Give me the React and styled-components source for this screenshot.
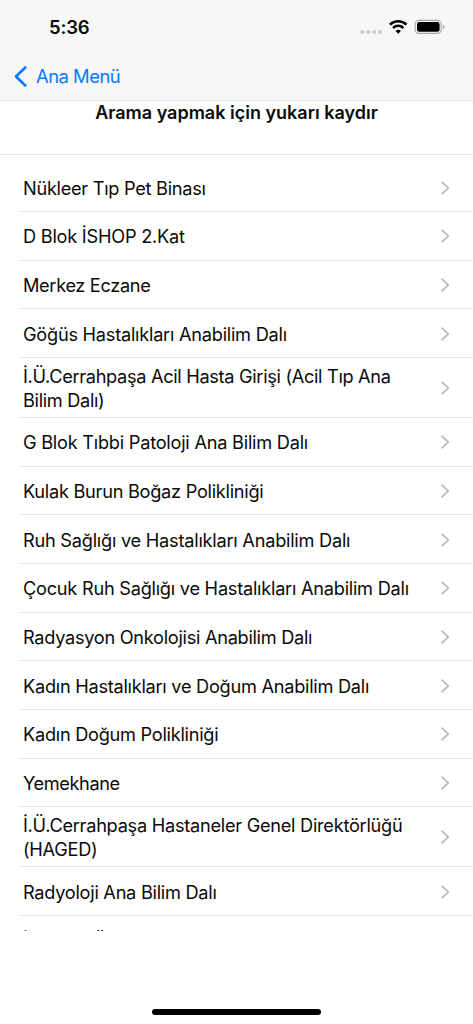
import styled, { createGlobalStyle } from "styled-components";

const GlobalStyle = createGlobalStyle`
  * {
    box-sizing: border-box;
  }
  body {
    margin: 0;
    background-color: #ffffff;
    font-family: Inter, "Liberation Sans", sans-serif;
    color: #0a0a0a;
  }
`;

const Container = styled.div`
  height: 1024px;
  display: flex;
  flex-direction: column;
  overflow: hidden;
`;
const Header = styled.header`
  flex: none;
  height: 101px;
  background-color: #f7f7f7;
  border-bottom: 1px solid #e4e4e4;
`;
const StatusBar = styled.div`
  height: 53px;
  padding: 1px 28px 0 49px;
  display: flex;
  align-items: center;
  justify-content: space-between;
`;
const Time = styled.span`
  font-size: 18.5px;
  font-weight: 600;
  letter-spacing: -0.2px;
`;
const StatusIcons = styled.svg`
  display: block;
`;
const BackButton = styled.button`
  height: 47px;
  padding: 0 0 0 14px;
  display: flex;
  align-items: center;
  gap: 9px;
  border: none;
  background: none;
  color: #087aff;
  font-family: inherit;
  font-size: 18.4px;
  letter-spacing: -0.5px;
`;
const BackLabel = styled.span`
  padding-bottom: 2px;
`;
const Banner = styled.div`
  flex: none;
  height: 54px;
  border-bottom: 1px solid #e6e6e6;
  text-align: center;
`;
const Title = styled.h1`
  margin: 0;
  font-size: 18px;
  font-weight: 600;
  line-height: 23px;
  letter-spacing: 0;
`;
const List = styled.ul`
  flex: none;
  height: 776px;
  margin: 0;
  padding: 8.4px 0 0 18px;
  overflow: hidden;
  list-style: none;
`;
const Row = styled.li`
  height: ${(props) => (props.$tall ? 60 : 48.66)}px;
  padding: 1.1px 23px 0 5px;
  display: flex;
  align-items: center;
  justify-content: space-between;
  border-bottom: 1px solid #e8e8e8;
  &:last-child {
    padding-top: 3px;
  }
`;
const Name = styled.span`
  width: 400px;
  font-size: 18.2px;
  line-height: 24px;
  letter-spacing: ${(props) => props.$spacing}px;
  white-space: pre-line;
`;
const Footer = styled.footer`
  flex: 1;
  display: flex;
  justify-content: center;
  align-items: flex-end;
  padding-bottom: 9px;
`;
const HomeIndicator = styled.div`
  width: 169px;
  height: 6px;
  border-radius: 3px;
  background-color: #000000;
`;

const places = [
  { name: "Nükleer Tıp Pet Binası", spacing: -0.28 },
  { name: "D Blok İSHOP 2.Kat", spacing: -0.24 },
  { name: "Merkez Eczane", spacing: -0.34 },
  { name: "Göğüs Hastalıkları Anabilim Dalı", spacing: -0.25 },
  {
    name: "İ.Ü.Cerrahpaşa Acil Hasta Girişi (Acil Tıp Ana\nBilim Dalı)",
    spacing: -0.32,
    tall: true,
  },
  { name: "G Blok Tıbbi Patoloji Ana Bilim Dalı", spacing: -0.24 },
  { name: "Kulak Burun Boğaz Polikliniği" },
  { name: "Ruh Sağlığı ve Hastalıkları Anabilim Dalı", spacing: -0.24 },
  { name: "Çocuk Ruh Sağlığı ve Hastalıkları Anabilim Dalı", spacing: -0.25 },
  { name: "Radyasyon Onkolojisi Anabilim Dalı", spacing: -0.29 },
  { name: "Kadın Hastalıkları ve Doğum Anabilim Dalı" },
  { name: "Kadın Doğum Polikliniği" },
  { name: "Yemekhane", spacing: -0.4 },
  {
    name: "İ.Ü.Cerrahpaşa Hastaneler Genel Direktörlüğü\n(HAGED)",
    tall: true,
  },
  { name: "Radyoloji Ana Bilim Dalı" },
  { name: "İstanbul Üniversitesi" },
];

const Chevron = () => (
  <svg width="9" height="14" viewBox="0 0 9 14" fill="none">
    <path
      d="M1.2 1.2L7.2 7L1.2 12.8"
      stroke="#c2c2c4"
      strokeWidth="2"
      strokeLinecap="round"
      strokeLinejoin="round"
    />
  </svg>
);

const App = () => {
  return (
    <Container>
      <GlobalStyle />
      <Header>
        <StatusBar>
          <Time>5:36</Time>
          <StatusIcons width="85" height="16" viewBox="360 19 85 16">
            <g fill="#cbcbcb">
              <circle cx="362.3" cy="32" r="2.1" />
              <circle cx="368.3" cy="32" r="2.1" />
              <circle cx="374.3" cy="32" r="2.1" />
              <circle cx="380.2" cy="32" r="2.1" />
            </g>
            <g fill="none" stroke="#000000" strokeWidth="2.5">
              <path d="M389.9 24.6a11.9 11.9 0 0 1 16.6 0" />
              <path d="M393 28a7.4 7.4 0 0 1 10.4 0" />
            </g>
            <path d="M395.5 31.1a4 4 0 0 1 5.4 0L398.2 33.8z" fill="#000000" />
            <rect
              x="415.2"
              y="20.4"
              width="26"
              height="13"
              rx="3.8"
              fill="none"
              stroke="#a5a5a5"
              strokeWidth="1.1"
            />
            <rect x="417" y="22.1" width="22.6" height="9.7" rx="2.3" />
            <path d="M442.9 24.8q1.7.7 1.7 2.2t-1.7 2.2z" fill="#a5a5a5" />
          </StatusIcons>
        </StatusBar>
        <BackButton>
          <svg width="13" height="21" viewBox="0 0 13 21" fill="none">
            <path
              d="M11.3 1.5L2 10.5L11.3 19.5"
              stroke="currentColor"
              strokeWidth="2.6"
              strokeLinecap="round"
              strokeLinejoin="round"
            />
          </svg>
          <BackLabel>Ana Menü</BackLabel>
        </BackButton>
      </Header>
      <Banner>
        <Title>Arama yapmak için yukarı kaydır</Title>
      </Banner>
      <List>
        {places.map((place) => (
          <Row key={place.name} $tall={place.tall}>
            <Name $spacing={place.spacing ?? -0.27}>{place.name}</Name>
            <Chevron />
          </Row>
        ))}
      </List>
      <Footer>
        <HomeIndicator />
      </Footer>
    </Container>
  );
};

export default App;
